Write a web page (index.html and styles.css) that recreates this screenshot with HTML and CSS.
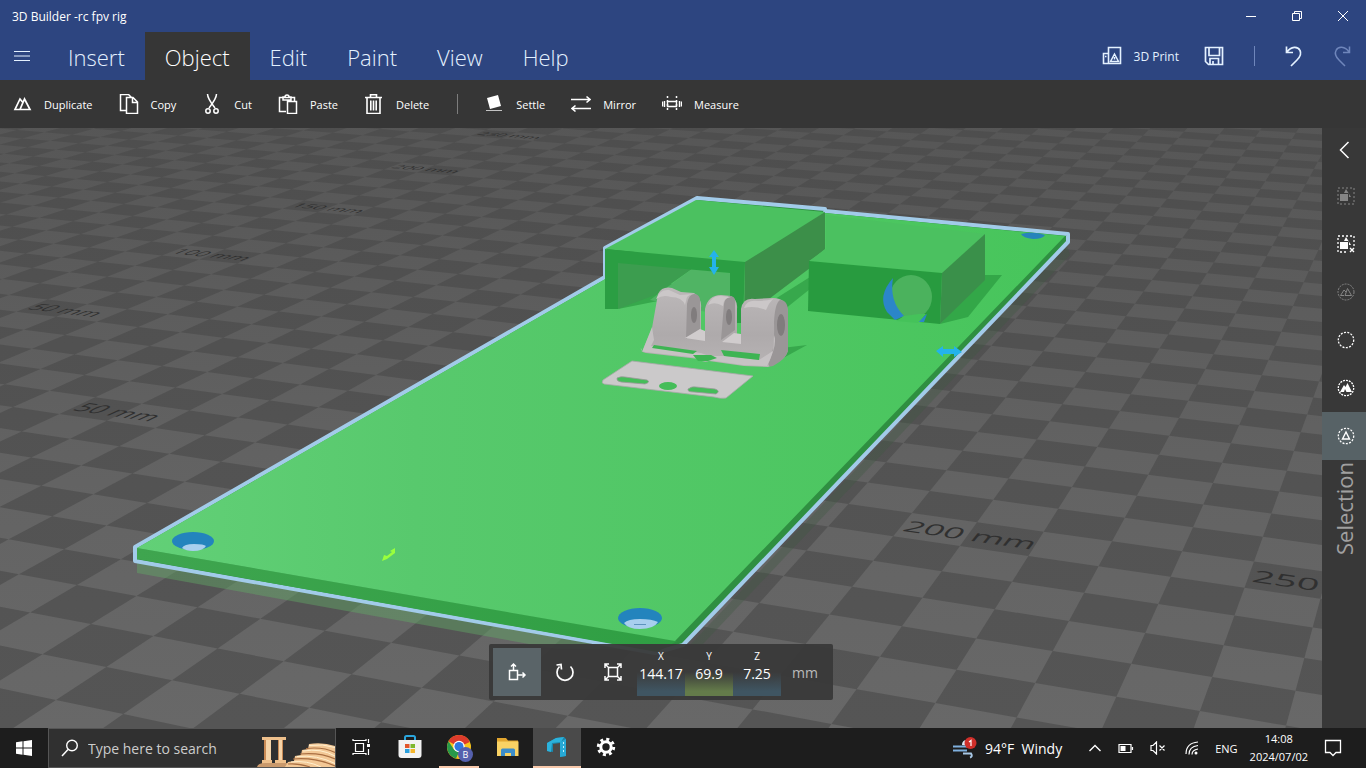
FILE: index.html
```html
<!DOCTYPE html>
<html lang="en">
  <head>
    <meta charset="UTF-8" />
    <title>3D Builder</title>
    <link rel="stylesheet" href="styles.css">
  </head>
  <body>
    <header class="titlebar">
      <h1 class="title">3D Builder -rc fpv rig</h1>
      <div class="window-buttons">
        <button aria-label="Minimize"><svg width="10" height="10"><path d="M0 5.5h10" /></svg></button>
        <button aria-label="Restore"><svg width="10" height="10"><path d="M.5 2.5h7v7h-7zM2.5 2V.5h7v7H8" /></svg></button>
        <button aria-label="Close"><svg width="10" height="10"><path d="M0 0l10 10M10 0L0 10" /></svg></button>
      </div>
    </header>

    <nav class="menubar">
      <button class="hamburger" aria-label="Menu"><svg width="16" height="10"><path d="M0 .5h16M0 5h16M0 9.5h16" /></svg></button>
      <button class="tab">Insert</button>
      <button class="tab active">Object</button>
      <button class="tab">Edit</button>
      <button class="tab">Paint</button>
      <button class="tab">View</button>
      <button class="tab">Help</button>
      <div class="actions">
        <button class="print">
          <svg width="20" height="20"><path d="M6.500 1.500h12v16h-12zM6 7.500H1.500v10H6M3 10.500h1.500" stroke-width="1.600" /><path d="M12.500 8l4 7.500h-8zM12.500 11v2.500M9.500 15.500h6" stroke-width="1.500" /></svg>
          3D Print
        </button>
        <button class="save" aria-label="Save"><svg width="20" height="20"><path d="M1.500 1.500h17v17h-14l-3-3zM5 2v7.500h10.500V2M6 18v-5.500h8.500V18M9 15v3" stroke-width="1.700" /></svg></button>
        <span class="divider"></span>
        <button class="undo" aria-label="Undo"><svg width="20" height="22"><path d="M2.500 1.500v6h6.500M3 7C7 1 14 1 16 5.500c2 4-.5 7-3 9.500l-6 6" stroke-width="1.700" /></svg></button>
        <button class="redo" aria-label="Redo" disabled><svg width="20" height="22"><path d="M17.500 1.500v6H11M17 7C13 1 6 1 4 5.500c-2 4 .5 7 3 9.500l6 6" stroke-width="1.500" /></svg></button>
      </div>
    </nav>

    <div class="toolbar">
      <button><svg width="20" height="20"><path d="M12.500 5l5.500 10.500H8zM7.500 15.500H3L8 5l2.500 3" stroke-width="1.700" /></svg>Duplicate</button>
      <button><svg width="20" height="20"><path d="M7 16.500H1.500V.5h8l3 3M7.500 3.500h6.500l4.500 4.500v11.500h-11zM13.500 4v4.500h5" stroke-width="1.500" /></svg>Copy</button>
      <button><svg width="20" height="20"><path d="M5.500 0c0 4 2 7 7.500 14M14.500 0c0 4-2 7-7.500 14" stroke-width="1.500" /><circle cx="6" cy="17" r="2.200" stroke-width="1.500" /><circle cx="14" cy="17" r="2.200" stroke-width="1.500" /></svg>Cut</button>
      <button><svg width="20" height="20"><path d="M8 17.500H1.500v-14h15v4M5 3v3h8V3h-2a2 2 0 0 0-4 0zM9.500 7.500h9v12h-9z" stroke-width="1.500" /></svg>Paste</button>
      <button><svg width="20" height="20"><path d="M1 3.500h17M6.500 3V.8h6V3M3 4v15.500h13V4M6.800 6.500v10M9.500 6.500v10M12.200 6.500v10" stroke-width="1.600" /></svg>Delete</button>
      <span class="divider"></span>
      <button><svg width="20" height="20"><path class="solid" d="M3 4l11-3 3 11-11 3z" /><path d="M2 16.500h16" stroke-opacity=".7" /></svg>Settle</button>
      <button><svg width="20" height="20"><path d="M0 5.500h19M15.500 2.500l3.500 3L15.500 8.500M20 14.500H1M4.500 11.500L1 14.500 4.500 17.500" stroke-width="1.600" /></svg>Mirror</button>
      <button><svg width="20" height="20"><path d="M5.500 7.500h9v5h-9zM.5 7.500v5M19.500 7.500v5M2.500 7v6M17.500 7v6" stroke-width="1.400" /><path d="M5.500 2v16M14.500 2v16" stroke-width="1.500" stroke-dasharray="2 2" /></svg>Measure</button>
    </div>

    <main class="workspace">
      <div class="viewport">
        <svg class="scene" viewBox="0 128 1322 600" preserveAspectRatio="xMidYMid slice">
          <defs>
            <linearGradient id="plate" x1="0" y1="0" x2="1" y2="0">
              <stop offset="0" stop-color="#62d077" />
              <stop offset=".3" stop-color="#58c96d" />
              <stop offset="1" stop-color="#47c55b" />
            </linearGradient>
            <linearGradient id="haze" x1="0" y1="0" x2="0" y2="1">
              <stop offset="0" stop-color="#484848" stop-opacity=".55" />
              <stop offset=".6" stop-color="#484848" stop-opacity=".15" />
              <stop offset="1" stop-color="#484848" stop-opacity="0" />
            </linearGradient>
            <linearGradient id="edge" x1="0" y1="0" x2="1" y2="0">
              <stop offset="0" stop-color="#3fa54f" />
              <stop offset="1" stop-color="#2f9f43" />
            </linearGradient>
            <linearGradient id="metal" x1="0" y1="0" x2="0" y2="1">
              <stop offset="0" stop-color="#bcb8b9" />
              <stop offset=".6" stop-color="#aeaaab" />
              <stop offset="1" stop-color="#b8b4b5" />
            </linearGradient>
          </defs>
          <rect class="floor" y="128" width="1322" height="600" />
          <path id="tiles" class="tiles" />
          <rect y="128" width="1322" height="600" fill="url(#haze)" />
          <g id="marks" class="marks"></g>

          <!-- base plate -->
          <path fill="#62a867" opacity=".45" d="M137 562v11l420 76h65z" />
          <path fill="#3f5a42" opacity=".35" d="M1067 246L690 645h12l368-390z" />
          <path fill="#2f8f41" stroke="#a2cbe9" stroke-width="4" stroke-linejoin="round" d="M135 547L605 277v-29l92-50 128 11v2l243 23v8L683 645l-28 8L135 561z" />
          <path fill="url(#edge)" d="M137 548l540 93-20 11L137 559z" />
          <path fill="url(#plate)" d="M137 548L607 278l92-77 366 35-390 405z" />

          <g>
            <ellipse cx="193" cy="541" rx="21" ry="9" fill="#2384bd" />
            <path fill="#a8cfee" d="M182 548q2-4 12-4t12 2q-3 5-13 5-7 0-11-3z" />
            <ellipse cx="640" cy="618" rx="22" ry="10" fill="#2384bd" />
            <path fill="#a8cfee" d="M624 623q4-4 16-4t18 3q-4 7-18 7-12 0-16-6z" />
            <path stroke="#5d93bd" d="M634 624.500h12" />
            <path fill="#2783bb" d="M1021 234q12-3 24 1-2 4-12 4-10-1-12-5z" />
          </g>

          <!-- shadows on the plate -->
          <path fill="#2c9c42" opacity=".75" d="M985 275h17l-34 42-28 7z" />
          <path fill="#37a84c" d="M745 318l65-41v12l-30 24-36 10zM618 309l40-8 20-14-20-10zM765 350l42-5-22 12z" />

          <!-- left block -->
          <path fill="#3c9d4f" d="M618 262l74 7-37 26-37 14z" />
          <path fill="#50b464" d="M692 269l38 4v44l-80-17z" />
          <path fill="#4bc160" d="M605 249l91-49 129 12-80 51z" />
          <path fill="#2b9e43" d="M605 249l140 13-2 61h-13v-50l-112-10v46h-13z" />
          <path fill="#3c8f49" d="M745 262l80-50v37l-15 12v7l-66 50z" />

          <!-- right block -->
          <path fill="#4bc160" d="M809 261l17-12v-34l159 19-43 39z" />
          <path fill="#289b3f" d="M809 261l133 12-2 51-132-13z" />
          <path fill="#3a904a" d="M942 273l43-39v46l-45 44z" />
          <ellipse cx="911" cy="297" rx="21" ry="22" fill="#4bb25d" />
          <path fill="#2b86c9" d="M893 278q-16 18-6 34l8 8 9-4q-15-15-11-38zM917 322l10-8-3 8z" />
          <path fill="#45c25a" d="M904 316l15-2h7l-8 9-22-2z" />

          <!-- hinge bracket -->
          <path fill="url(#metal)" d="M642 352l10-24 6-34q4-8 14-6l9 4 13 1q8 5 7 15v29h4v-28q3-14 16-14l10 1q7 4 6 13v30l4-2V309q2-12 14-10l18-1q14 0 15 15v37q-2 10-20 17l-24-1-35-5q-6 2-10-2l-53-6q-5-1-4-4z" />
          <path fill="#9a9697" d="M687 304q2-11 8-10t5 9v26l-14 10zM724 304q2-9 7-8t4 8v26l-14 10zM774 322q1-19 6-22 8 0 8 12v39q-2 8-15 15-7 2-3-6 5-12 4-38z" />
          <path fill="#cbc7c8" d="M656 299q4-10 13-9l11 5 13-1q-7 1-7 7l-1 4q-3-8-14-8-8-3-15 2zM708 305q4-10 13-9l10 1q-8 1-8 9-8-5-15-1zM744 308q3-9 14-7 8 0 15-2-5 5-7 11-12-5-22-2z" />
          <path fill="#cbc7c8" d="M642 352l10-25 2 13-3 6 50 7 8 3h16l34 4 14-9 1-16q4 9-7 31l-24-1-35-5q-6 2-10-2l-53-6q-5-1-4-4z" opacity=".8" />
          <ellipse cx="694" cy="315" rx="3" ry="8" fill="#807c7d" />
          <ellipse cx="729" cy="317" rx="3" ry="8" fill="#807c7d" />
          <ellipse cx="781" cy="325" rx="4" ry="11" fill="#807c7d" />
          <path fill="#3eb453" d="M654 345l43 6-4 3-41-6zM721 350l39 4-1 6-35-4zM693 355h18l6 3-9 3h-10z" />
          <path fill="#d0cccd" d="M685 338l15-9 5 2v10zM722 342l12-9 7 1v10z" />

          <!-- loose mounting strip -->
          <path fill="#cbc9ca" stroke="#aaa8a9" stroke-width=".8" d="M632 361l121 15-27 22q-5 1-12-1l-110-13q-3-1-1-4z" />
          <path fill="#45bd59" stroke="#9a9899" stroke-width=".8" d="M617 378q4-2 8-1l22 3q4 2-2 4l-24-2q-5-1-4-4zM688 389q4-3 8-2l19 2q6 2 1 5l-22-2q-7 0-6-3z" />
          <ellipse cx="668" cy="386" rx="9" ry="4" fill="#45bd59" />

          <!-- move handles -->
          <path fill="#24b3ea" d="M714 250l5 7h-3v10h3l-5 8-5-8h3v-10h-3zM936 351l7-5v3h11v-3l8 6-8 5v-3h-11v3z" />
          <path fill="#9aff3c" d="M382 561l2-6 3 1 5-4-2-1 5-3v5l-8 6z" />
        </svg>

        <form class="transform">
          <button type="button" class="mode active" aria-label="Move"><svg width="20" height="20"><path d="M2.500 8.500h8v9h-8zM6.500 8V2M4 4.500L6.500 2 9 4.500M11 13h7M15.500 10.500L18 13l-2.500 2.500" stroke-width="1.500" /></svg></button>
          <button type="button" class="mode" aria-label="Rotate"><svg width="20" height="20"><path d="M15.500 4.500A8 8 0 1 1 4.500 4.500M1.500 3l4.500-.5.500 5" stroke-width="1.700" /></svg></button>
          <button type="button" class="mode" aria-label="Scale"><svg width="20" height="20"><path d="M5.500 5.500h9v9h-9zM2 2l4 4M18 2l-4 4M2 18l4-4M18 18l-4-4M2 6V2h4M14 2h4v4M2 14v4h4M14 18h4v-4" stroke-width="1.500" /></svg></button>
          <label class="axis blue">X<input value="144.17" /></label>
          <label class="axis green">Y<input value="69.9" /></label>
          <label class="axis blue">Z<input value="7.25" /></label>
          <span class="unit">mm</span>
        </form>
      </div>

      <aside class="sidebar">
        <button class="collapse" aria-label="Collapse"><svg width="20" height="20"><path d="M12.500 2l-8 8 8 8" stroke-width="1.500" /></svg></button>
        <button aria-label="Group" disabled><svg width="18" height="18"><path d="M1 1h16v16H1z" stroke-dasharray="2 2" /><path class="solid" d="M3 7h8v7H3zM9 2l5 8h-2V6H7z" /></svg></button>
        <button aria-label="Ungroup"><svg width="18" height="18"><path d="M17 11V1H1v16h10" stroke-dasharray="2 2" stroke-width="1.300" /><path class="solid" d="M3 7h8v7H3zM9 2l5 8h-2V6H7z" /><path d="M13 13l4 4M17 13l-4 4" stroke-width="1.400" /></svg></button>
        <button aria-label="Select all" disabled><svg width="18" height="18"><circle cx="9" cy="9" r="8" stroke-dasharray="2 1" /><path d="M10.500 5.500l4 7H8zM7 12.500H3.500L7 7l2 2" /></svg></button>
        <button aria-label="Select none"><svg width="18" height="18"><circle cx="9" cy="9" r="7.700" stroke-dasharray="2 1.400" stroke-width="1.300" /></svg></button>
        <button aria-label="Invert selection"><svg width="18" height="18"><circle cx="9" cy="9" r="7.700" stroke-dasharray="2 1" stroke-width="1.300" /><path class="solid" d="M10.500 4l4.500 9H9.500L8 10l-1 3H3l4-7 1.500 2z" /></svg></button>
        <button class="active" aria-label="Select object"><svg width="18" height="18"><circle cx="9" cy="9" r="7.700" stroke-dasharray="2 1.400" stroke-width="1.300" /><path d="M9 5l3.500 7h-7z" stroke-width="1.400" /></svg></button>
        <p class="sidebar-title">Selection</p>
      </aside>
    </main>

    <footer class="taskbar">
      <button class="start" aria-label="Start"><svg width="16" height="16"><path class="solid" d="M0 2.200L6.500 1.300V7.500H0zM7.500 1.200L16 0v7.500H7.500zM0 8.500h6.500v6.200L0 13.800zM7.500 8.500H16V16l-8.500-1.200z" /></svg></button>
      <div class="search">
        <svg width="18" height="18"><circle cx="11" cy="6.500" r="5.300" stroke-width="1.400" /><path d="M7 10.500L1 17" stroke-width="1.500" /></svg>
        <input type="text" aria-label="Search" placeholder="Type here to search" />
        <svg class="temple" width="78" height="38" viewBox="0 0 78 38">
          <path fill="#c98a55" d="M7 8h5v23H7zM21 10h5v21h-5z" />
          <path fill="#f6d4a8" d="M9 8h5v23H9zM22 10h3v21h-3z" />
          <path fill="#eec08c" d="M5 8h24v3H5zM5 31h10v4H5zM18 31h11v4H18z" />
          <path fill="#c9996c" d="M0 38q1-4 8-4h22l8 4z" />
          <path fill="#f3c896" d="M52 15q14-2 26 2v21H28l3-5 6-1 1-5 6-1 1-5 6-1z" />
          <path stroke="#a96f42" stroke-width="1.200" fill="none" d="M49 19.500q17-2 29 4M43 25q20-2 35 5M36 30q22-2 42 7M31 35q10-1 22 3" />
          <path stroke="#fff0cf" fill="none" d="M52 16.500q14-2 26 2M46 22q18-3 32 5M40 27.500q20-2 38 7M34 33q16-2 30 5" />
        </svg>
      </div>
      <div class="apps">
        <button aria-label="Task view"><svg width="18" height="18"><path d="M3.500 5.500h8v8h-8zM1 1v2M14 1v2M1 2.500h13M1 17v-2M14 17v-2M1 15.500h13M16.500 1v4M16.500 11v6" stroke-width="1.200" /><path class="solid" d="M15 6h3v3h-3z" /></svg></button>
        <button aria-label="Store"><svg width="26" height="26"><path d="M8 7V3.500Q8 2 9.500 2h7Q18 2 18 3.500V7" stroke="#2aa5dc" stroke-width="2" /><path fill="#f2f2f2" stroke="none" d="M1.500 6h23v15q0 3-3 3h-17q-3 0-3-3z" /><path fill="#e2562b" stroke="none" d="M8 10h4.500v4H8z" /><path fill="#7db72f" stroke="none" d="M13.500 10H18v4h-4.500z" /><path fill="#2a9fdc" stroke="none" d="M8 15h4.500v4H8z" /><path fill="#f5b62c" stroke="none" d="M13.500 15H18v4h-4.500z" /></svg></button>
        <button class="running" aria-label="Chrome">
          <svg width="26" height="26"><g stroke="none"><circle cx="13" cy="13" r="12" fill="#f8c51c" /><path fill="#dd3b2c" d="M13 13L2.500 7.200A12 12 0 0 1 23.800 8z" /><path fill="#27994a" d="M2.500 7.200L8 15.500 13 18l-3 6.500A12 12 0 0 1 2.500 7.200z" /><circle cx="13" cy="12.500" r="5.700" fill="#fff" /><circle cx="13" cy="12.500" r="4.500" fill="#2f78e0" /></g></svg>
          <span class="profile">B</span>
        </button>
        <button aria-label="File Explorer"><svg width="24" height="24"><g stroke="none"><path fill="#e2a62f" d="M1 3h9l2 2.500h10v5H1z" /><path fill="#f9d264" d="M1 6.500h21.500V21H1z" /><path fill="#3c8dc9" d="M5 21v-6q0-1.500 1.500-1.500h11q1.500 0 1.500 1.500v6h-4v-3h-6v3z" /></g></svg></button>
        <button class="running active" aria-label="3D Builder"><svg width="24" height="24"><g stroke="none"><path fill="#1b86ab" d="M2 8l9-5 8-1 2 2v17l-6 1V8L8 9v8l-6-1z" /><path fill="#2bb2dc" d="M2 8l9-5 8-1-3 5-9 1-1 9-4-1z" /><path fill="#27a9d6" d="M15 7l6-3v17l-6 1z" /><path fill="#bdf0ff" d="M18 7h1v2h-1zM18 11h1v2h-1zM18 15h1v2h-1z" /></g></svg></button>
        <button aria-label="Settings"><svg width="20" height="20"><circle cx="10" cy="10" r="5.200" stroke-width="3" /><circle cx="10" cy="10" r="7.700" stroke-width="3" stroke-dasharray="3 3.048" /></svg></button>
      </div>
      <div class="tray">
        <button class="weather"><svg width="26" height="22"><path d="M1 9.500h16q4-1 3-4M1 13.500h14" stroke="#7fb0de" stroke-width="2" /><path d="M11 16.500h8q2 3-1 4" stroke="#a8c8e6" stroke-width="2" /><path fill="#dce8f4" stroke="none" d="M10 8q0-5 5-5h4v6z" /><circle cx="18.500" cy="6" r="6" fill="#cf2f2a" stroke="none" /><path d="M17 5l2-1.500V9" stroke-width="1.200" /></svg>94°F&nbsp; Windy</button>
        <button class="chevron" aria-label="Show hidden icons"><svg width="14" height="14"><path d="M1.500 10L7 4.500l5.500 5.500" stroke-width="1.400" /></svg></button>
        <button class="battery" aria-label="Battery"><svg width="16" height="12"><path d="M1 2.500h12v8H1zM14.500 5v3" stroke-width="1.200" /><path class="solid" d="M2.500 4h5v5h-5z" /></svg></button>
        <button class="volume" aria-label="Volume"><svg width="16" height="14"><path d="M1 4.500h2L6.500 1v12L3 9.500H1zM9.500 4.500l5 5M14.500 4.500l-5 5" stroke-width="1.200" /></svg></button>
        <button class="network" aria-label="Network"><svg width="14" height="14"><path d="M1 13Q1 2 13 1M4 13.500Q4 5.500 13 4.500M7 13.500Q7 9 13 8" stroke-width="1.200" /><circle class="solid" cx="11" cy="12" r="1.500" /></svg></button>
        <button class="lang">ENG</button>
        <button class="clock"><time>14:08</time><time>2024/07/02</time></button>
        <button class="notify" aria-label="Notifications"><svg width="18" height="18"><path d="M1.500 1.500h15v12H12l-3 3-3-3H1.500z" stroke-width="1.300" /></svg></button>
      </div>
    </footer>
    <script src="scene.js"></script>
  </body>
</html>
```
FILE: styles.css
```css
* {
  box-sizing: border-box;
  margin: 0;
  padding: 0;
}
body {
  display: flex;
  flex-direction: column;
  height: 100vh;
  overflow: hidden;
  background: #363636;
  color: #fff;
  font-family: "Open Sans", "Noto Sans", sans-serif;
  font-size: 12px;
}
button {
  display: flex;
  align-items: center;
  justify-content: center;
  border: 0;
  background: none;
  color: inherit;
  font: inherit;
  white-space: nowrap;
}
svg {
  flex: none;
  fill: none;
  stroke: currentColor;
}
.solid {
  fill: currentColor;
  stroke: none;
}

/* title and menu */
.titlebar {
  display: flex;
  height: 32px;
  align-items: center;
  justify-content: space-between;
  padding-left: 12px;
  background: #2d4580;
}
.title {
  font-size: 12px;
  font-weight: 400;
}
.window-buttons {
  display: flex;
}
.window-buttons button {
  width: 46px;
  height: 32px;
}
.menubar {
  display: flex;
  height: 48px;
  background: #2d4580;
  color: #e4f1ff;
}
.hamburger {
  width: 48px;
  padding-right: 4px;
}
.tab {
  padding: 2px 20px 0;
  font-size: 22px;
  font-weight: 300;
}
.tab.active {
  background: #363636;
  color: #fff;
}
.actions {
  display: flex;
  align-items: center;
  margin-left: auto;
}
.print {
  gap: 12px;
  margin-right: 25px;
}
.save {
  margin-right: 30px;
}
.divider {
  width: 1px;
  height: 20px;
  background: #7d7d7d;
}
.actions .divider {
  margin-right: 15px;
  background: #6f86bb;
}
.undo,
.redo {
  width: 48px;
  height: 48px;
}
.redo {
  color: #6f86bb;
}

.toolbar {
  display: flex;
  height: 48px;
  align-items: center;
  gap: 26px;
  padding-left: 12px;
  background: #363636;
  font-size: 11px;
}
.toolbar button {
  gap: 12px;
}
.toolbar .divider {
  margin: 0 0 0 2px;
}

/* 3D view */
.workspace {
  display: flex;
  flex: 1;
  min-height: 0;
}
.viewport {
  position: relative;
  flex: 1;
  overflow: hidden;
}
.scene {
  display: block;
  width: 100%;
  height: 100%;
  stroke: none;
}
.floor {
  fill: #686868;
}
.tiles {
  fill: #555;
}
.marks {
  fill: #303030;
  font-family: "Open Sans", "Noto Sans", sans-serif;
}
.transform {
  position: absolute;
  bottom: 28px;
  left: 50%;
  display: flex;
  padding: 4px;
  border-radius: 2px;
  background: #393939f2;
  transform: translateX(-50%);
}
.mode {
  width: 48px;
  height: 48px;
}
.mode.active {
  background: #5a6468;
}
.axis {
  display: flex;
  flex-direction: column;
  align-items: center;
  width: 48px;
  height: 48px;
  font-size: 10px;
  line-height: 16px;
}
.axis input {
  width: 48px;
  border: 0;
  background: none;
  color: #fff;
  font: 14px/20px "Open Sans", "Noto Sans", sans-serif;
  text-align: center;
}
.axis.blue {
  background: linear-gradient(#0000 50%, #3f5562 90%);
}
.axis.green {
  background: linear-gradient(#0000 50%, #647b4a 90%);
}
.unit {
  width: 48px;
  color: #bbb;
  font-size: 14px;
  line-height: 50px;
  height: 48px;
  text-align: center;
}

/* selection panel */
.sidebar {
  width: 44px;
  background: #383838;
}
.sidebar button {
  width: 44px;
  height: 48px;
  padding-left: 4px;
}
.sidebar .collapse {
  height: 44px;
}
.sidebar button:disabled {
  color: #858585;
}
.sidebar .active {
  background: #576266;
}
.sidebar-title {
  width: 44px;
  padding-top: 2px;
  color: #a0a0a0;
  font-size: 22px;
  line-height: 44px;
  writing-mode: sideways-lr;
  text-align: right;
}

/* taskbar */
.taskbar {
  display: flex;
  height: 40px;
  background: #1d1d1d;
}
.start {
  width: 48px;
}
.search {
  display: flex;
  align-items: center;
  width: 288px;
  padding-left: 12px;
  border: 1px solid #555;
  background: #303030;
}
.search input {
  flex: 1;
  min-width: 0;
  margin-left: 9px;
  border: 0;
  background: none;
  font: 14px "Open Sans", "Noto Sans", sans-serif;
}
.search input::placeholder {
  color: #ccc;
}
.temple {
  stroke: none;
}
.apps {
  display: flex;
  gap: 1px;
  margin-left: 1px;
}
.apps button {
  position: relative;
  width: 48px;
  border-bottom: 2px solid #0000;
}
.apps .running {
  width: 40px;
  margin: 0 4px;
  border-color: #f8c9ab;
}
.apps .active {
  width: 48px;
  margin: 0;
  background: #4a4a4a;
}
.profile {
  position: absolute;
  right: 6px;
  bottom: 4px;
  width: 15px;
  height: 15px;
  border-radius: 50%;
  background: #5560ad;
  font-size: 9px;
  line-height: 15px;
}
.tray {
  display: flex;
  align-items: center;
  gap: 16px;
  margin-left: auto;
  padding-right: 24px;
}
.weather {
  gap: 7px;
  margin-right: 10px;
  font-size: 14px;
}
.network {
  margin-left: 3px;
}
.lang {
  margin-right: -4px;
  font-size: 11px;
}
.clock {
  flex-direction: column;
  font-size: 11px;
  line-height: 18px;
}
```
FILE: scene.js
```js
// camera: floor coordinates (1 unit = 10 mm) to view coordinates
function depth(x, y) {
  return 1 - 0.01204 * (x - 20) + 0.0282 * y;
}
function project(x, y) {
  var w = depth(x, y);
  return [
    (53.3 * (x - 20) + 44 * y + 912) / w,
    (2.94 * (x - 20) - 8.05 * y + 513) / w
  ];
}

var d = "";
for (var x = -60; x < 70; x++) {
  for (var y = -16; y < 75; y++) {
    if ((x + y) % 2 !== 0 || depth(x + 1, y) < 0.3) continue;
    d += "M" + [project(x, y), project(x + 1, y), project(x + 1, y + 1), project(x, y + 1)].join("L") + "z";
  }
}
document.getElementById("tiles").setAttribute("d", d);

// ruler text lies flat on the floor, one tile high
function mark(text, x, y) {
  var o = project(x + 0.05, y - 0.75);
  var r = project(x + 1.05, y - 0.75);
  var u = project(x + 0.05, y + 0.25);
  var m = [(r[0] - o[0]) / 39, (r[1] - o[1]) / 39, (o[0] - u[0]) / 32, (o[1] - u[1]) / 32];
  var el = document.createElementNS("http://www.w3.org/2000/svg", "text");
  el.textContent = text;
  el.setAttribute("font-size", 20);
  el.setAttribute("transform", "matrix(" + m.concat(o) + ")");
  document.getElementById("marks").appendChild(el);
}

mark("50 mm", 5, 0);
mark("200 mm", 20, 0);
mark("250", 25, 0);
for (var i = 5; i <= 25; i += 5) {
  mark(i * 10 + " mm", 0, i);
}
```
